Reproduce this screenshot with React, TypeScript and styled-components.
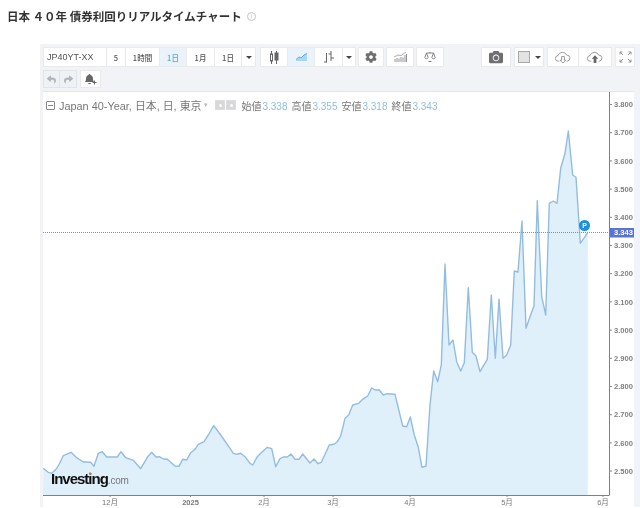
import { FaCamera, FaCog, FaReply, FaShare } from 'react-icons/fa'
import styled, { createGlobalStyle } from 'styled-components'

const GlobalStyle = createGlobalStyle`
  html, body { margin: 0; padding: 0; background: #fff; }
  body { font-family: "Liberation Sans", "Noto Sans CJK JP", sans-serif; color: #444; }
`

const Page = styled.div`
  width: 640px;
  height: 508px;
  overflow: hidden;
  filter: blur(0.35px);
`

const TitleRow = styled.div`
  height: 44px;
  padding: 9px 0 0 7px;
  box-sizing: border-box;
  display: flex;
  align-items: flex-start;
  gap: 5px;
`

const Title = styled.h1`
  margin: 0;
  font-family: "Noto Sans CJK JP", sans-serif;
  font-size: 11.5px;
  line-height: 14px;
  font-weight: 700;
  color: #333;
`

const InfoIcon = styled.span`
  width: 7px;
  height: 7px;
  margin-top: 3px;
  border: 1px solid #c4c4c4;
  border-radius: 50%;
  color: #aaa;
  font-size: 6px;
  line-height: 7px;
  text-align: center;
`

const Panel = styled.div`
  margin-left: 40px;
  height: 463px;
  padding: 3px 5px 0 3px;
  box-sizing: border-box;
  background: #f1f3f6;
  display: flex;
  flex-direction: column;
`

const Toolbar = styled.div`
  display: flex;
  height: 20px;
  flex: none;
`

const SecondBar = styled(Toolbar)`
  height: 18px;
  margin-top: 3px;
  margin-bottom: 4px;
`

const Group = styled.div<{ $left?: number; $auto?: boolean }>`
  display: flex;
  margin-left: ${(p) => (p.$auto ? 'auto' : `${p.$left ?? 0}px`)};
`

const ToolButton = styled.div<{ $w: number; $active?: boolean }>`
  width: ${(p) => p.$w}px;
  box-sizing: border-box;
  display: flex;
  align-items: center;
  justify-content: center;
  background: ${(p) => (p.$active ? '#eaf3f9' : '#fff')};
  border: 1px solid #e8eaee;
  border-left-width: 0;
  color: ${(p) => (p.$active ? '#55a8dc' : '#555')};
  font-family: "Noto Sans CJK JP", "Liberation Sans", sans-serif;
  font-size: 7.5px;
  font-weight: 500;
  &:first-child { border-left-width: 1px; }
`

const SymbolButton = styled(ToolButton)`
  justify-content: flex-start;
  padding-left: 3px;
  font-family: "Liberation Sans", sans-serif;
  font-size: 9px;
  font-weight: 400;
`

const HistoryButton = styled(ToolButton)`
  background: #eff1f4;
  border-color: #e2e4e8;
  color: #b2b6bc;
  font-size: 9px;
`

const Caret = styled.span`
  width: 0;
  height: 0;
  border-left: 3px solid transparent;
  border-right: 3px solid transparent;
  border-top: 3px solid #444;
`

const GrayIcon = styled.span<{ $size: number }>`
  display: flex;
  color: #6f6f6f;
  font-size: ${(p) => p.$size}px;
`

const Swatch = styled.span`
  width: 10px;
  height: 10px;
  margin-right: 5px;
  background: #e3e3e3;
  border: 1px solid #a8a8a8;
`

const ChartBox = styled.div`
  position: relative;
  flex: 1;
  margin-right: 1px;
  background: #fff;
  box-shadow: 0 -1px 0 #e4e6ea;
`

const ChartSvg = styled.svg`
  display: block;
  width: 591px;
  height: 415px;
`

const Legend = styled.div`
  position: absolute;
  left: 3px;
  top: 6px;
  display: flex;
  align-items: center;
  height: 14px;
  font-size: 10.9px;
  color: #777;
  white-space: nowrap;
`

const CollapseBox = styled.span`
  width: 7px;
  height: 7px;
  margin-right: 4px;
  border: 1px solid #888;
  border-radius: 1px;
  position: relative;
  &::after {
    content: '';
    position: absolute;
    left: 1px;
    right: 1px;
    top: 3px;
    height: 1px;
    background: #888;
  }
`

const SmallCaret = styled.span`
  width: 11px;
  margin-left: 3px;
  color: #bbb;
  font-size: 7px;
`

const MiniIcon = styled.span`
  width: 8px;
  height: 8px;
  margin-right: 1px;
  background: #d8d8db;
  border: 1px solid #ddd;
  display: flex;
  align-items: center;
  justify-content: center;
  &::after {
    content: '';
    width: 3px;
    height: 3px;
    border-radius: 50%;
    background: #fff;
  }
`

const OhlcRow = styled.span`
  display: flex;
  align-items: baseline;
  margin-left: 4px;
`

const Ohlc = styled.span`
  width: 50px;
  display: inline-flex;
  align-items: baseline;
  gap: 1px;
  font-family: "Noto Sans CJK JP", sans-serif;
  font-size: 10px;
`

const OhlcValue = styled.span`
  font-family: "Liberation Sans", sans-serif;
  color: #8fbfe0;
  font-size: 10px;
`

const Logo = styled.div`
  position: absolute;
  left: 8px;
  top: 377px;
  display: flex;
  align-items: baseline;
  font-size: 15px;
  font-weight: 700;
  letter-spacing: -1px;
  color: #111;
  line-height: 20px;
  &::after {
    content: '';
    position: absolute;
    left: 38px;
    top: 3px;
    width: 2px;
    height: 2px;
    border-radius: 50%;
    background: #e9a13b;
  }
`

const LogoCom = styled.span`
  font-size: 10px;
  font-weight: 400;
  letter-spacing: -0.2px;
  color: #777;
`

const points: [number, number][] = [
  [43.3, 468.3], [48.3, 472.3], [51.7, 473.3], [56, 469.3], [59.3, 464], [63.3, 455.7], [71, 452.3],
  [76.7, 457.7], [83.3, 462], [90.7, 462.3], [94, 466.3], [98.3, 453.3], [102.3, 451.7], [106.7, 457],
  [117.3, 457], [121, 451.7], [125.7, 457.7], [133.3, 460.3], [140.7, 468.7], [147.3, 457.3], [151.7, 452.3],
  [156, 457], [159.3, 456.7], [163.3, 459], [167.3, 459.3], [175, 466], [179, 466.3], [182.7, 459.3],
  [186.7, 460], [190.7, 452.7], [195, 449.3], [198.3, 444.3], [204, 441.7], [208.3, 435], [213.7, 425.7],
  [220, 434], [230, 448.3], [233.3, 453.3], [236.7, 454.3], [240.7, 453.3], [245, 456.7], [250, 463.3],
  [252.7, 465], [257.3, 456.7], [260.7, 453.3], [267.3, 447.3], [271.7, 448.7], [275.7, 466.7], [280, 458.7],
  [283.3, 457], [287.3, 457], [291, 454], [295, 459.3], [299, 459.3], [302.7, 454], [310, 463], [314, 459],
  [318, 463.7], [321.3, 462.3], [329.3, 445], [334, 444.3], [337.3, 441.7], [340.7, 436], [345, 418.3],
  [348.7, 415], [352.7, 405], [358.7, 403.3], [362.7, 399.3], [367.7, 396], [371.7, 388], [375.3, 390],
  [379.3, 390], [383.3, 395], [387.3, 393.7], [395, 394.3], [402.7, 426], [406.7, 426.7], [410.3, 417],
  [414.3, 435], [418.3, 447.3], [422, 467.3], [426, 466], [430, 405], [433.7, 371], [437.7, 381.7],
  [441.3, 365], [445, 264], [449, 345], [453, 340], [456.7, 361.7], [460.7, 371], [464.3, 362.7],
  [468.3, 287.7], [472.3, 352.3], [476, 356], [480, 371.7], [487.3, 359.3], [491.3, 295], [495.3, 358.3],
  [499, 299.3], [503, 358.3], [506.7, 355], [510.7, 345], [514.3, 271], [518, 272], [522, 221], [526, 328.3],
  [530, 316.7], [534, 305.7], [537.3, 200.7], [541.7, 296.7], [545.7, 315], [549.3, 203.3], [553.3, 201],
  [557, 203.3], [560.7, 168.3], [565, 153.3], [568.3, 131], [572.7, 175], [576, 177.3], [580.3, 243.3],
  [587.7, 232.7],
]

const linePath = points.map(([x, y], i) => `${i === 0 ? 'M' : 'L'}${x} ${y}`).join(' ')
const areaPath = `${linePath} L587.7 495 L43 495 Z`

const prices = ['3.800', '3.700', '3.600', '3.500', '3.400', '3.300', '3.200', '3.100', '3.000', '2.900', '2.800', '2.700', '2.600', '2.500']
const months: [string, number][] = [['12月', 110], ['2025', 190.5], ['2月', 264], ['3月', 333], ['4月', 410], ['5月', 507], ['6月', 603]]

function priceY(i: number) {
  return 104.5 + i * 28.2
}

function CandleIcon() {
  return (
    <svg width="9" height="13" viewBox="0 0 9 13" fill="none" stroke="#666">
      <path d="M1.5 0v3M1.5 10v3M6.5 0v2M6.5 9v4" />
      <rect x=".5" y="3" width="2" height="7" />
      <rect x="5" y="2" width="3" height="7" fill="#666" />
    </svg>
  )
}

function AreaIcon() {
  return (
    <svg width="11" height="8" viewBox="0 0 11 8">
      <path d="M0 7L3 4.5L5 5.5L8 2.5L11 1V8H0Z" fill="#a9d6f2" />
      <path d="M0 6.5L3 4L5 5L8 2L11 .5" fill="none" stroke="#55a8dc" />
    </svg>
  )
}

function BarsIcon() {
  return (
    <svg width="10" height="12" viewBox="0 0 10 12" fill="none" stroke="#666">
      <path d="M2.5 2v9.5M0 11h2.5M7 0v10M7 3H4.5M7 7h3" />
    </svg>
  )
}

function IndicatorIcon() {
  return (
    <svg width="13" height="10" viewBox="0 0 13 10" fill="none" stroke="#888" strokeWidth=".9">
      <path d="M1 10V7M3 10V6M5 10V6.5M7 10V5M9 10V5.5M11 10V3M12.5 10V2" />
      <path d="M0 5L4 3L7 3.5L12 0" strokeWidth=".7" />
    </svg>
  )
}

function ScaleIcon() {
  return (
    <svg width="12" height="10" viewBox="0 0 12 10" fill="none" stroke="#777" strokeWidth=".9">
      <path d="M2.5 1H9.5M6 0V1M2.5 1L.8 5.5A1.8 1.8 0 0 0 4.2 5.5ZM9.5 1L7.8 5.5A1.8 1.8 0 0 0 11.2 5.5ZM4.5 9.5H7.5" />
    </svg>
  )
}

function BellPlusIcon() {
  return (
    <svg width="12" height="11" viewBox="0 0 12 11">
      <path d="M4.5 0A1 1 0 0 1 5.5 1C7.3 1.4 8 3 8 5C8 6.5 8.6 7.4 9 8H0C.4 7.4 1 6.5 1 5C1 3 1.7 1.4 3.5 1A1 1 0 0 1 4.5 0ZM3.2 9H5.8A1.3 1.3 0 0 1 3.2 9Z" fill="#666" />
      <path d="M9.5 6.5V10.5M7.5 8.5H11.5" stroke="#666" />
    </svg>
  )
}

function CloudIcon({ upload }: { upload?: boolean }) {
  return (
    <svg width="18" height="12" viewBox="0 0 18 13" fill="none" stroke="#888" strokeWidth=".9">
      <path d="M5 11H4A3 3 0 0 1 3.6 5 A5 5 0 0 1 13 4.5 A3.3 3.3 0 0 1 14 11H13" />
      {upload ? (
        <path d="M9 4.5L12.5 8.5H10.5V13H7.5V8.5H5.5Z" fill="#666" stroke="none" />
      ) : (
        <path d="M7.5 6V10H5.8L9 13L12.2 10H10.5V6Z" fill="#fff" />
      )}
    </svg>
  )
}

function ExpandIcon() {
  return (
    <svg width="13" height="12" viewBox="0 0 13 12" fill="none" stroke="#888" strokeWidth=".9">
      <path d="M1 3.5V1H3.5M1 1L4 4M9.5 1H12V3.5M12 1L9 4M1 8.5V11H3.5M1 11L4 8M12 8.5V11H9.5M12 11L9 8" />
    </svg>
  )
}

function Chart() {
  return (
    <ChartSvg viewBox="43 92 591 415">
      <path d={areaPath} fill="#dff0fb" />
      <path d={linePath} fill="none" stroke="#93bde0" strokeWidth="1.4" strokeLinejoin="round" />
      <line x1="43" x2="609" y1="232.5" y2="232.5" stroke="#6b97c8" strokeDasharray="1 1" />
      <line x1="609.5" x2="609.5" y1="92" y2="495" stroke="#808080" />
      <line x1="43" x2="609.5" y1="495.5" y2="495.5" stroke="#808080" />
      {prices.map((p, i) => (
        <g key={p}>
          <line x1="609" x2="612" y1={priceY(i)} y2={priceY(i)} stroke="#888" />
          <text x="614" y={priceY(i) + 2.7} fontSize="7.6" fontWeight="700" fontFamily="Liberation Sans" fill="#808080">{p}</text>
        </g>
      ))}
      {months.map(([m, x]) => (
        <g key={m}>
          <line x1={x} x2={x} y1="495" y2="497" stroke="#888" />
          <text x={x} y="505" textAnchor="middle" fontSize="7.5" fontWeight={m === '2025' ? 700 : 400} fontFamily="Liberation Sans, Noto Sans CJK JP" fill="#777">{m}</text>
        </g>
      ))}
      <rect x="610" y="228" width="24" height="9.5" fill="#5b73d2" />
      <text x="614" y="235.4" fontSize="7.6" fontWeight="700" fontFamily="Liberation Sans" fill="#fff">3.343</text>
      <circle cx="584.5" cy="225.5" r="5.5" fill="#1b8fe0" />
      <text x="584.5" y="228.2" textAnchor="middle" fontSize="7" fontWeight="700" fontFamily="Liberation Sans" fill="#fff">P</text>
    </ChartSvg>
  )
}

export default function App() {
  return (
    <Page>
      <GlobalStyle />
      <TitleRow>
        <Title>日本 ４０年 債券利回りリアルタイムチャート</Title>
        <InfoIcon>i</InfoIcon>
      </TitleRow>
      <Panel>
        <Toolbar>
          <Group>
            <SymbolButton $w={64}>JP40YT-XX</SymbolButton>
            <ToolButton $w={19}>5</ToolButton>
            <ToolButton $w={34}>1時間</ToolButton>
            <ToolButton $w={27} $active>1日</ToolButton>
            <ToolButton $w={28}>1月</ToolButton>
            <ToolButton $w={27}>1日</ToolButton>
            <ToolButton $w={14}><Caret /></ToolButton>
          </Group>
          <Group $left={4}>
            <ToolButton $w={28}><CandleIcon /></ToolButton>
            <ToolButton $w={27} $active><AreaIcon /></ToolButton>
            <ToolButton $w={28}><BarsIcon /></ToolButton>
            <ToolButton $w={13}><Caret /></ToolButton>
          </Group>
          <Group $left={2}>
            <ToolButton $w={26}><GrayIcon $size={12}><FaCog /></GrayIcon></ToolButton>
          </Group>
          <Group $left={2}>
            <ToolButton $w={28}><IndicatorIcon /></ToolButton>
          </Group>
          <Group $left={2}>
            <ToolButton $w={28}><ScaleIcon /></ToolButton>
          </Group>
          <Group $auto>
            <ToolButton $w={30}><GrayIcon $size={14}><FaCamera /></GrayIcon></ToolButton>
          </Group>
          <Group $left={3}>
            <ToolButton $w={30}><Swatch /><Caret /></ToolButton>
          </Group>
          <Group $left={3}>
            <ToolButton $w={32}><CloudIcon /></ToolButton>
            <ToolButton $w={33}><CloudIcon upload /></ToolButton>
          </Group>
          <Group $left={3}>
            <ToolButton $w={20}><ExpandIcon /></ToolButton>
          </Group>
        </Toolbar>
        <SecondBar>
          <Group>
            <HistoryButton $w={17}><FaReply /></HistoryButton>
            <HistoryButton $w={17}><FaShare /></HistoryButton>
          </Group>
          <Group $left={3}>
            <ToolButton $w={21}><BellPlusIcon /></ToolButton>
          </Group>
        </SecondBar>
        <ChartBox>
          <Chart />
          <Legend>
            <CollapseBox />
            Japan 40-Year, 日本, 日, 東京
            <SmallCaret>▾</SmallCaret>
            <MiniIcon />
            <MiniIcon />
            <OhlcRow>
              <Ohlc>始値<OhlcValue>3.338</OhlcValue></Ohlc>
              <Ohlc>高値<OhlcValue>3.355</OhlcValue></Ohlc>
              <Ohlc>安値<OhlcValue>3.318</OhlcValue></Ohlc>
              <Ohlc>終値<OhlcValue>3.343</OhlcValue></Ohlc>
            </OhlcRow>
          </Legend>
          <Logo>Investing<LogoCom>.com</LogoCom></Logo>
        </ChartBox>
      </Panel>
    </Page>
  )
}
